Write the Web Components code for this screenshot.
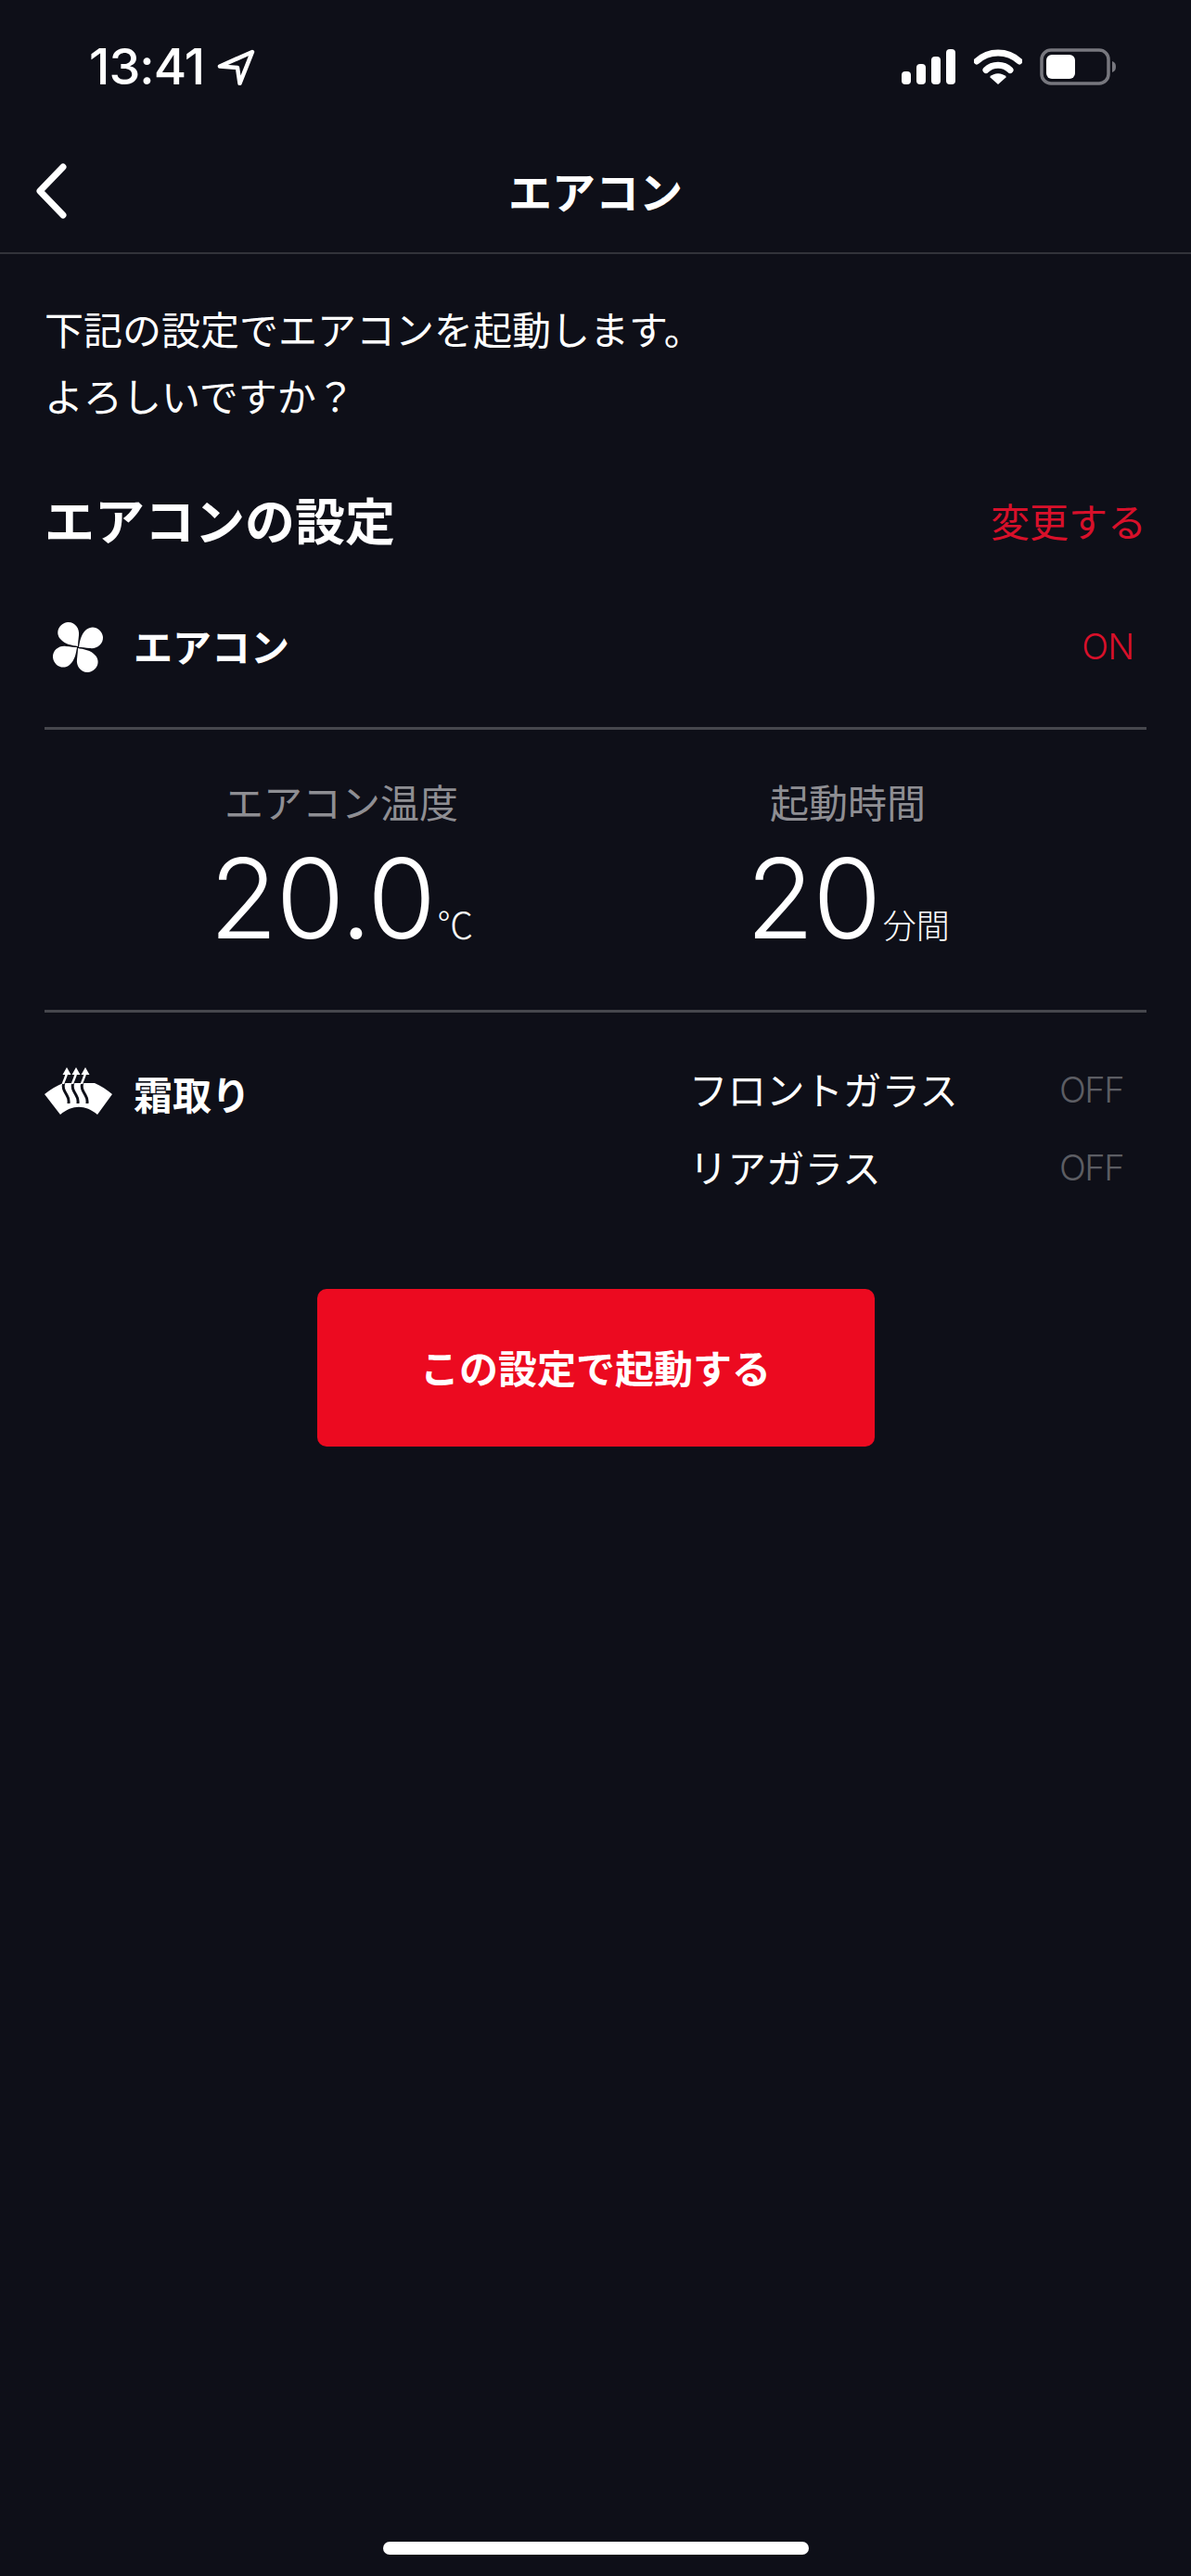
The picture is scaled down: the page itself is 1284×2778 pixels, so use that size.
<!DOCTYPE html>
<html lang="ja">
<head>
<meta charset="UTF-8">
<title>エアコン</title>
<style>
  html, body { margin: 0; background: #0e0f18; }
  body {
    width: 1284px;
    height: 2778px;
    color: #fff;
    font-family: "Noto Sans CJK JP", sans-serif;
    display: flex;
    flex-direction: column;
  }
</style>
</head>
<body>
<status-bar></status-bar>
<nav-bar>エアコン</nav-bar>
<intro-text>
  <span>下記の設定でエアコンを起動します。</span>
  <span>よろしいですか？</span>
</intro-text>
<section-head link="変更する">エアコンの設定</section-head>
<setting-row value="ON"><fan-icon slot="icon"></fan-icon>エアコン</setting-row>
<stat-pair>
  <stat-item label="エアコン温度" value="20.0" unit="℃" unit-size="39"></stat-item>
  <stat-item label="起動時間" value="20" unit="分間" unit-size="36"></stat-item>
</stat-pair>
<defrost-row>
  <toggle-line value="OFF">フロントガラス</toggle-line>
  <toggle-line value="OFF">リアガラス</toggle-line>
</defrost-row>
<action-button>この設定で起動する</action-button>
<home-indicator></home-indicator>

<script>
  function define(name, html) {
    customElements.define(name, class extends HTMLElement {
      constructor() {
        super();
        this.attachShadow({ mode: 'open' }).innerHTML = html(this);
      }
    });
  }

  const JP = '"Noto Sans CJK JP", sans-serif';

  define('status-bar', () => `<style>
      :host { display: flex; justify-content: space-between; align-items: center; height: 144px; box-sizing: border-box; padding: 0 0 0 96px; flex: none; }
      .left { display: flex; align-items: center; gap: 13px; }
      .time { font: 500 54px/72px Inter, sans-serif; letter-spacing: -1px; }
      .right { display: flex; align-items: center; padding-right: 81px; }
      svg { display: block; }
    </style>
    <div class="left">
      <span class="time">13:41</span>
      <svg width="42" height="40" viewBox="0 0 42 40"><path d="M39 4 4 19.500 23 21 25.500 38Z" fill="none" stroke="#fff" stroke-width="4.500" stroke-linejoin="round"/></svg>
    </div>
    <div class="right">
      <svg width="58" height="38" viewBox="0 0 58 38" fill="#fff">
        <rect x="0" y="24" width="10" height="14" rx="4"/><rect x="16" y="16" width="10" height="22" rx="4"/><rect x="32" y="8" width="10" height="30" rx="4"/><rect x="48" y="0" width="10" height="38" rx="4"/>
      </svg>
      <svg style="margin-left:20px" width="52" height="38" viewBox="0 0 52 38">
        <path d="M3 13C16 1 36 1 49 13" fill="none" stroke="#fff" stroke-width="7" stroke-linecap="round"/>
        <path d="M13 22.500C20 15.500 32 15.500 39 22.500" fill="none" stroke="#fff" stroke-width="7" stroke-linecap="round"/>
        <path d="M17 30C22 25 30 25 35 30L26 38Z" fill="#fff"/>
      </svg>
      <svg style="margin-left:19px" width="82" height="40" viewBox="0 0 82 40">
        <rect x="2" y="2" width="72" height="36" rx="10" fill="none" stroke="#77777e" stroke-width="3.500"/>
        <rect x="7" y="7" width="31" height="26" rx="6" fill="#fff"/>
        <path d="M78 14C81 15 82 17 82 20S81 25 78 26Z" fill="#77777e"/>
      </svg>
    </div>`);

  define('nav-bar', () => `<style>
      :host { display: flex; align-items: center; justify-content: center; position: relative; height: 130px; box-sizing: border-box; border-bottom: 2px solid #32333a; flex: none; padding-bottom: 6px; }
      .title { font: 700 47px/60px ${JP}; }
      svg { position: absolute; left: 37px; top: 31px; }
    </style>
    <svg width="36" height="62" viewBox="0 0 36 62"><path d="M31 5 6 31 31 57" fill="none" stroke="#fff" stroke-width="7" stroke-linecap="round" stroke-linejoin="round"/></svg>
    <span class="title"><slot></slot></span>`);

  define('intro-text', () => `<style>
      :host { display: flex; flex-direction: column; padding: 44px 48px 0; flex: none; font: 400 42px/72px ${JP}; }
      ::slotted(span) { display: block; }
    </style><slot></slot>`);

  define('section-head', (el) => `<style>
      :host { display: flex; justify-content: space-between; align-items: center; padding: 62px 48px 0; flex: none; }
      .title { font: 700 54px/72px ${JP}; }
      .link { font: 400 42px/71px ${JP}; color: #d8102a; padding-top: 1px; }
    </style>
    <span class="title"><slot></slot></span><span class="link">${el.getAttribute('link')}</span>`);

  define('setting-row', (el) => `<style>
      :host { display: flex; align-items: center; margin: 50px 48px 0; padding: 0 14px 38px 9px; height: 100px; flex: none; border-bottom: 3px solid #46474d; }
      .label { font: 700 42px/60px ${JP}; margin-left: 33px; flex: 1; }
      .value { font: 300 38px/58px Inter, sans-serif; letter-spacing: -1px; color: #d8102a; padding-top: 2px; }
    </style>
    <slot name="icon"></slot><span class="label"><slot></slot></span><span class="value">${el.getAttribute('value')}</span>`);

  define('fan-icon', () => `<style>:host { display: block; width: 54px; height: 54px; margin-top: 4px; } svg { display: block; overflow: visible; }</style>
    <svg width="54" height="54" viewBox="-27 -27 54 54" fill="#fff">
      ${[0, 90, 180, 270].map(a => `<path transform="rotate(${a})" d="M0-1C-6-2-14-3-19-9-25-16-20-26-11-27-3-27.500 2-20 1-13 .5-8 0-4 0-1Z"/>`).join('')}
    </svg>`);

  define('stat-pair', () => `<style>
      :host { display: grid; grid-template-columns: 546px 546px; margin: 0 48px; height: 305px; padding: 36px 0 0 47px; box-sizing: border-box; border-bottom: 3px solid #46474d; flex: none; }
    </style><slot></slot>`);

  define('stat-item', (el) => `<style>
      :host { display: flex; flex-direction: column; align-items: center; }
      .label { font: 400 42px/82px ${JP}; color: #8e8e93; }
      .num { display: flex; align-items: baseline; }
      .value { font: 300 120px/128px Inter, sans-serif; letter-spacing: -1.75px; }
      .unit { font: 300 ${el.getAttribute('unit-size')}px/50px ${JP}; margin-left: 3px; }
    </style>
    <span class="label">${el.getAttribute('label')}</span>
    <div class="num"><span class="value">${el.getAttribute('value')}</span><span class="unit">${el.getAttribute('unit')}</span></div>`);

  define('defrost-row', () => `<style>
      :host { display: flex; margin: 50px 48px 0; flex: none; }
      .left { display: flex; align-items: center; height: 74px; flex: none; width: 698px; }
      .label { font: 700 42px/60px ${JP}; margin-left: 22px; }
      .lines { flex: 1; display: flex; flex-direction: column; gap: 20px; }
      svg { display: block; margin-top: -4px; }
    </style>
    <div class="left">
      <svg width="74" height="54" viewBox="0 0 74 54">
        <path d="M0 30C6 25 13 21 20 18L54 18C61 21 67 25 73 30L57 52C44 41 30 41 17 52Z" fill="#fff"/>
        <g fill="none" stroke="#0e0f18" stroke-width="3">
          <path d="M21 17C19 23 21 26 24 31S26 36 26 40"/>
          <path d="M31 17C29 23 31 26 34 31S36 36 36 40"/>
          <path d="M41 17C39 23 41 26 44 31S46 36 46 40"/>
        </g>
        <g fill="none" stroke="#fff" stroke-width="2.500">
          <path d="M24 6C24 11 21 14 20 19"/><path d="M34 6C34 11 31 14 30 19"/><path d="M44 6C44 11 41 14 40 19"/>
        </g>
        <path d="M24 1 19.500 9H28.500ZM34 1 29.500 9H38.500ZM44 1 39.500 9H48.500Z" fill="#fff"/>
      </svg>
      <span class="label">霜取り</span>
    </div>
    <div class="lines"><slot></slot></div>`);

  define('toggle-line', (el) => `<style>
      :host { display: flex; justify-content: space-between; padding-right: 25px; font: 400 41.500px/64px ${JP}; margin-left: -3px; }
      .value { font: 300 38px/61px Inter, sans-serif; letter-spacing: -1.500px; color: #5c5d63; padding-top: 3px; }
    </style>
    <span><slot></slot></span><span class="value">${el.getAttribute('value')}</span>`);

  define('action-button', () => `<style>
      :host { display: flex; align-items: center; justify-content: center; align-self: center; box-sizing: border-box; width: 601px; height: 170px; padding-bottom: 2px; margin-top: 100px; background: #ec0a20; border-radius: 10px; font: 700 42px/60px ${JP}; flex: none; }
    </style><slot></slot>`);

  define('home-indicator', () => `<style>
      :host { display: block; align-self: center; width: 459px; height: 14px; border-radius: 7px; background: #fff; margin-top: auto; margin-bottom: 23px; flex: none; }
    </style>`);
</script>
</body>
</html>
